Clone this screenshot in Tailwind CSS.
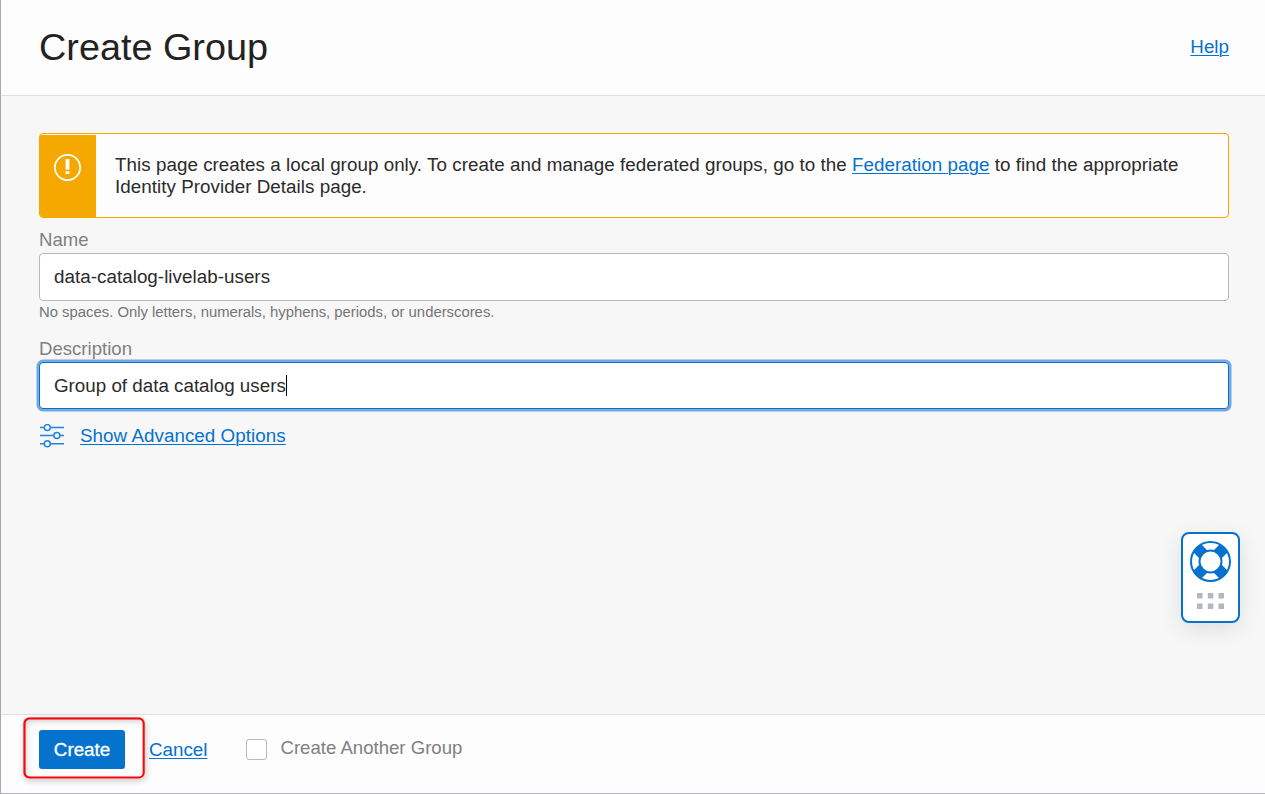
<!DOCTYPE html>
<html lang="en">
<head>
<meta charset="utf-8">
<title>Create Group</title>
<script src="https://cdn.jsdelivr.net/npm/@tailwindcss/browser@4"></script>
</head>
<body class="font-['Liberation_Sans',Arial,sans-serif] text-[18.8px] leading-[22px] text-[#2b2b2b]">
<div class="relative flex h-[794px] w-[1265px] flex-col overflow-hidden border-b border-l border-b-[#b3b3b8] border-l-[#a9a9a9] bg-[#f7f7f7]">
  <header class="flex h-24 shrink-0 items-center justify-between border-b border-[#e2e2e2] bg-[#fdfdfd] pr-9 pb-[2px] pl-[38px]">
    <h1 class="text-[37.8px] leading-10 text-[#222]">Create Group</h1>
    <a class="text-[#0572ce] underline decoration-1 underline-offset-2">Help</a>
  </header>

  <main class="flex-1 pt-[37px] pr-9 pl-[38px]">
    <div class="flex h-[85px] overflow-hidden rounded-[4px] border border-[#f5a800] bg-[#fdfdfd]">
      <div class="mt-px flex w-14 shrink-0 justify-center bg-[#f5a800] pt-[18px] pr-px">
        <svg class="size-7" viewBox="0 0 28 28" fill="none"><circle cx="13.5" cy="14.5" r="12.7" stroke="#fff" stroke-width="1.8"/><path d="M11.6 6h3.8v10.5h-3.8zM11.6 18.2h3.8v2.9h-3.8z" fill="#fff"/></svg>
      </div>
      <p class="pt-5 pl-[19px] tracking-[0.043px]">This page creates a local group only. To create and manage federated groups, go to the <a class="text-[#0572ce] underline decoration-1 underline-offset-2">Federation page</a> to find the appropriate<br>Identity Provider Details page.</p>
    </div>

    <label class="mt-[11px] block text-[18.6px] text-[#808080]">Name</label>
    <div class="mt-[2px] flex h-12 items-center rounded-[4px] border border-[#b6b9c1] bg-white pl-[14px] tracking-[0.04px]">data-catalog-livelab-users</div>
    <p class="mt-px text-[14.85px] leading-5 text-[#757575]">No spaces. Only letters, numerals, hyphens, periods, or underscores.</p>

    <label class="mt-4 block text-[18.6px] text-[#808080]">Description</label>
    <div class="mt-[2px] flex h-[47px] items-center rounded-[4px] border border-[#0572ce] bg-white pl-[14px] shadow-[0_0_0_2.5px_#77a8e0]">Group of data catalog users<span class="h-[21px] w-px bg-black"></span></div>

    <div class="mt-[15px] flex items-center">
      <svg class="ml-px h-6 w-[25px]" viewBox="0 0 25 24" fill="none" stroke="#2482d6" stroke-width="1.5"><path d="M0 3.6h4.1M10.5 3.6H24M0 11.6h13.7M20.1 11.6H24M0 19.7h4.1M10.5 19.7H24"/><circle cx="7.3" cy="3.6" r="3"/><circle cx="16.9" cy="11.6" r="3"/><circle cx="7.3" cy="19.7" r="3"/></svg>
      <a class="ml-[15px] tracking-[0.05px] text-[#0572ce] underline decoration-1 underline-offset-2">Show Advanced Options</a>
    </div>
  </main>

  <footer class="flex h-[79px] shrink-0 items-start border-t border-[#e2e2e2] bg-[#fdfdfd] pt-[15px] pl-[38px]">
    <button class="h-[39px] w-[86px] rounded-[3px] bg-[#0572ce] text-white [-webkit-text-stroke:0.3px_white]">Create</button>
    <a class="mt-[9px] ml-6 text-[#0572ce] underline decoration-1 underline-offset-2">Cancel</a>
    <span class="mt-[9px] ml-[39px] size-[21px] rounded-[3px] border border-[#b6b9c1] bg-white"></span>
    <span class="mt-[7px] ml-[13px] text-[18.6px] text-[#808080]">Create Another Group</span>
  </footer>

  <div class="absolute top-[717px] left-[22px] h-[62px] w-[122px] rounded-[6px] shadow-[1px_2px_6px_rgba(0,0,0,.2),inset_2px_3px_7px_rgba(0,0,0,.25)]">
    <svg class="block h-[62px] w-[122px]" viewBox="0 0 122 62" fill="none"><rect x="1.5" y="1.5" width="119.2" height="59" rx="5" stroke="#fb0509" stroke-width="2.1"/></svg>
  </div>

  <div class="absolute top-[532px] left-[1180px] flex h-[91px] w-[59px] flex-col items-center rounded-[8px] border-2 border-[#0572ce] bg-white pt-[7px] shadow-[0_6px_22px_rgba(0,0,0,.1)]">
    <svg class="size-[41px] shrink-0" viewBox="0 0 41 41" fill="none"><path d="M7 7l27 27M34 7L7 34" stroke="#0572ce" stroke-width="11.3"/><circle cx="20.5" cy="20.5" r="11" fill="#fff" stroke="#0572ce" stroke-width="2"/><circle cx="20.5" cy="20.5" r="19.5" stroke="#0572ce" stroke-width="2"/></svg>
    <svg class="mt-[11px] mr-px h-[17px] w-[28px] shrink-0" viewBox="0 0 28 17" fill="#b3b8bd"><path d="M1 0h5.5v5.5H1zM11.8 0h5.5v5.5h-5.5zM22.5 0H28v5.5h-5.5zM1 10.5h5.5V16H1zM11.8 10.5h5.5V16h-5.5zM22.5 10.5H28V16h-5.5z"/></svg>
  </div>
</div>
</body>
</html>
